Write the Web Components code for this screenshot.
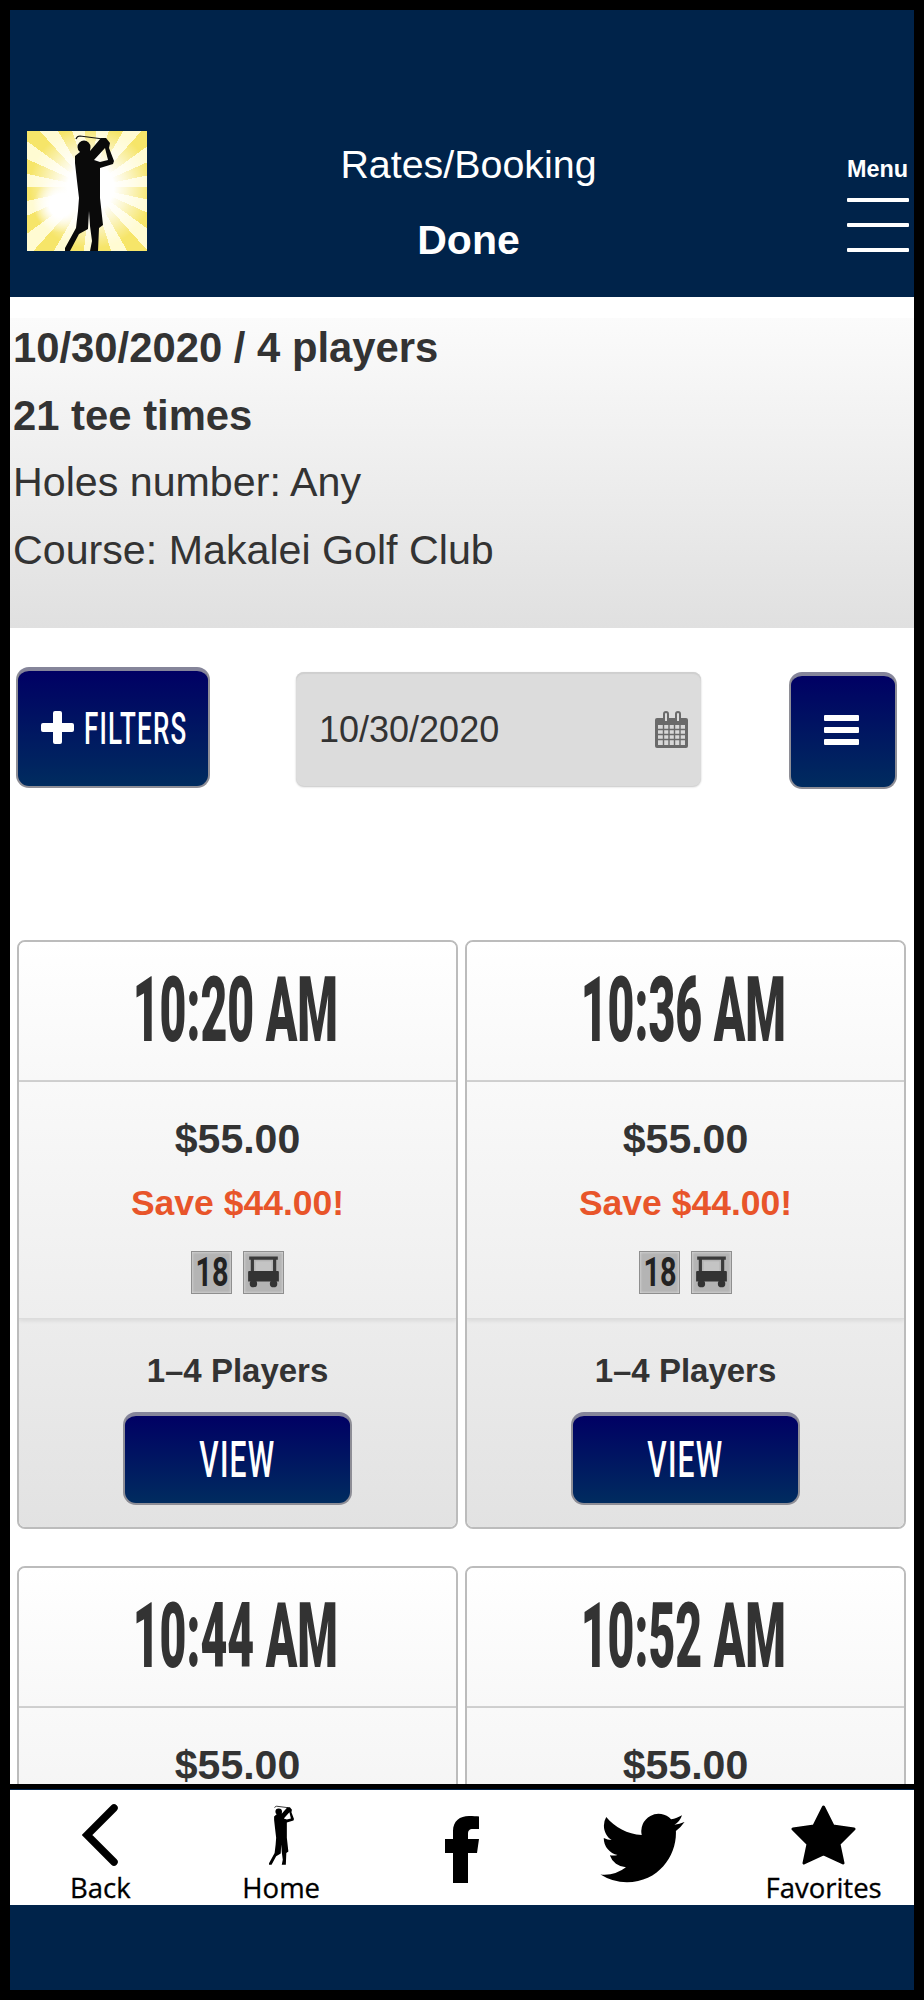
<!DOCTYPE html>
<html>
<head>
<meta charset="utf-8">
<title>Rates/Booking</title>
<style>
html, body { margin: 0; padding: 0; background: #000; }
body { font-family: "Liberation Sans", Arial, sans-serif; color: #333; }
</style>
</head>
<body>
<golf-app>
  <golf-header slot="top" title="Rates/Booking" status="Done"></golf-header>
  <golf-summary>
    <b>10/30/2020 / 4 players</b>
    <b>21 tee times</b>
    <span>Holes number: Any</span>
    <span>Course: Makalei Golf Club</span>
  </golf-summary>
  <golf-toolbar date="10/30/2020"></golf-toolbar>
  <tee-list>
    <tee-card time="10:20 AM" price="$55.00" save="Save $44.00!" players="1–4 Players"></tee-card>
    <tee-card time="10:36 AM" price="$55.00" save="Save $44.00!" players="1–4 Players"></tee-card>
    <tee-card time="10:44 AM" price="$55.00" save="Save $44.00!" players="1–4 Players"></tee-card>
    <tee-card time="10:52 AM" price="$55.00" save="Save $44.00!" players="1–4 Players"></tee-card>
  </tee-list>
  <golf-footer slot="bottom"></golf-footer>
</golf-app>

<script>
const GOLFER = 'M53 21L48 25L48 32L50 50L52 67L51 80L49 97L38 117L38 120L43 120L52 103L61 98L62 80L63 95L65 110L63 120L71 120L72 97L76 94L73 67L73 37L86 33L87 30L82 17L83 12L79 7L74 7L63 20L63.500 16A6.500 6.500 0 0 0 50.500 16A6.500 6.500 0 0 0 53 21ZM67 29L78 17L81 29L73 31Z';
const CONDENSED = '"Roboto", "Liberation Sans", sans-serif';

//=============APP FRAME========================================================
class GolfApp extends HTMLElement {
  constructor() {
    super();
    this.attachShadow({ mode: 'open' });
    this.shadowRoot.innerHTML = `
    <style>
      :host { display: block; width: 904px; height: 1980px; margin: 10px; background: #fff; }
      .frame { display: flex; flex-direction: column; height: 100%; }
      .scroll { flex: 1; min-height: 0; overflow: hidden; }
    </style>
    <div class="frame">
      <slot name="top"></slot>
      <div class="scroll"><slot></slot></div>
      <slot name="bottom"></slot>
    </div>`;
  }
}
customElements.define('golf-app', GolfApp);

//=============HEADER===========================================================
class GolfHeader extends HTMLElement {
  constructor() {
    super();
    this.attachShadow({ mode: 'open' });
    this.shadowRoot.innerHTML = `
    <style>
      :host { display: block; height: 287px; background: #00234a; color: #fff; }
      .row { display: grid; grid-template-columns: 120px 1fr 62px; padding: 121px 5px 0 17px; }
      .logo { width: 120px; height: 120px; display: block;
        background:
          radial-gradient(circle at 28% 62%, #fff 0 10%, rgba(255,255,255,0) 24%),
          radial-gradient(circle at 53% 47%, #fff 0 26%, rgba(255,255,255,.7) 40%, rgba(255,255,255,0) 68%),
          repeating-conic-gradient(from 6deg at 53% 47%, #fffbd2 0 12deg, #f6e569 12deg 24deg); }
      .logo svg { display: block; }
      .title { text-align: center; padding-right: 57px; margin-top: -3px; }
      .name { font-size: 39.400px; line-height: 72px; height: 76px; }
      .state { font-size: 41px; font-weight: bold; line-height: 72px; }
      .menu { font-size: 23.400px; font-weight: bold; line-height: 28px; margin-top: 24px; white-space: nowrap; }
      .bar { height: 4px; width: 62px; background: #fff; border-radius: 1px; margin-bottom: 21px; }
      .menu .bar:first-of-type { margin-top: 15px; }
    </style>
    <div class="row">
      <div class="logo">
        <svg width="120" height="120" viewBox="0 0 120 120">
          <path d="${GOLFER}" fill="#0a0a0a" fill-rule="evenodd"/>
          <path d="M76 8L53 5Q50 5 49 8" fill="none" stroke="#111" stroke-width="1.200"/>
        </svg>
      </div>
      <div class="title">
        <div class="name"></div>
        <div class="state"></div>
      </div>
      <div class="menu">Menu<div class="bar"></div><div class="bar"></div><div class="bar"></div></div>
    </div>`;
    this.shadowRoot.querySelector('.name').textContent = this.getAttribute('title');
    this.shadowRoot.querySelector('.state').textContent = this.getAttribute('status');
  }
}
customElements.define('golf-header', GolfHeader);

//=============SEARCH SUMMARY===================================================
class GolfSummary extends HTMLElement {
  constructor() {
    super();
    this.attachShadow({ mode: 'open' });
    this.shadowRoot.innerHTML = `
    <style>
      :host { display: block; margin-top: 21px; height: 310px; box-sizing: border-box; padding-left: 3px;
        background: linear-gradient(#fbfbfb, #e0e0e0);
        font-size: 41.800px; line-height: 67.500px; color: #333; }
      .lines { transform: translateY(-4px); }
      ::slotted(*) { display: block; white-space: nowrap; }
      ::slotted(span) { font-size: 41.200px; }
    </style>
    <div class="lines"><slot></slot></div>`;
  }
}
customElements.define('golf-summary', GolfSummary);

//=============TOOLBAR==========================================================
class BlueButton extends HTMLElement {
  constructor() {
    super();
    this.attachShadow({ mode: 'open' });
    this.shadowRoot.innerHTML = `
    <style>
      :host { display: flex; align-items: center; justify-content: center; box-sizing: border-box;
        border: 2px solid #8e8e96; border-top: 4px solid #85859a; border-radius: 13px;
        background: linear-gradient(#000064, #002c5f); color: #fff; }
    </style>
    <slot></slot>`;
  }
}
customElements.define('blue-button', BlueButton);

class GolfToolbar extends HTMLElement {
  constructor() {
    super();
    this.attachShadow({ mode: 'open' });
    this.shadowRoot.innerHTML = `
    <style>
      :host { display: flex; align-items: flex-start; height: 312px; box-sizing: border-box; padding-left: 6px; background: #fff; }
      .filters { width: 194px; height: 121px; margin-top: 39px; gap: 10px; }
      .plus { display: block; margin-bottom: 3px; }
      .narrow { display: block; width: 102px; white-space: nowrap; font-family: ${CONDENSED};
        font-weight: 500; font-size: 44px; line-height: 50px; letter-spacing: 2px; transform-origin: left center; transform: scaleX(.59); }
      .date { width: 405px; height: 114px; margin: 44px 0 0 86px; box-sizing: border-box; display: flex; align-items: center;
        justify-content: space-between; padding: 2px 13px 0 23px; border-radius: 8px; background: #dcdcdc;
        box-shadow: inset 0 2px 1px #cfcfcf, 0 1px 2px #c4c4c4; font-size: 36px; color: #333; }
      .date svg { display: block; }
      .list { width: 108px; height: 117px; margin: 44px 0 0 88px; flex-direction: column; }
      .list i { display: block; width: 35px; height: 6px; margin: 3px 0; background: #fff; border-radius: 1px; position: relative; top: -2px; left: -2px; }
    </style>
    <blue-button class="filters">
      <svg class="plus" width="33" height="33" viewBox="0 0 33 33"><path d="M12 2a2 2 0 0 1 2-2h5a2 2 0 0 1 2 2v10h10a2 2 0 0 1 2 2v5a2 2 0 0 1-2 2H21v10a2 2 0 0 1-2 2h-5a2 2 0 0 1-2-2V21H2a2 2 0 0 1-2-2v-5a2 2 0 0 1 2-2h10z" fill="#fff"/></svg>
      <span class="narrow">FILTERS</span>
    </blue-button>
    <div class="date">
      <span class="val"></span>
      <svg width="33" height="38" viewBox="0 0 33 38">
        <path d="M2 7h29a2 2 0 0 1 2 2v26a2 2 0 0 1-2 2H2a2 2 0 0 1-2-2V9a2 2 0 0 1 2-2z" fill="#6a6a6a"/>
        <path d="M3 14h27v20H3z" fill="#d8d8d8"/>
        <path d="M3 18.500h27M3 23.500h27M3 28.500h27M8.500 14v20M14 14v20M19.500 14v20M25 14v20" stroke="#6a6a6a" stroke-width="1.400" fill="none"/>
        <path d="M9 10V3a2 2 0 0 1 4 0v7M21 10V3a2 2 0 0 1 4 0v7" stroke="#6a6a6a" stroke-width="2" fill="#dcdcdc"/>
      </svg>
    </div>
    <blue-button class="list"><i></i><i></i><i></i></blue-button>`;
    this.shadowRoot.querySelector('.val').textContent = this.getAttribute('date');
  }
}
customElements.define('golf-toolbar', GolfToolbar);

//=============TEE TIMES========================================================
class TeeList extends HTMLElement {
  constructor() {
    super();
    this.attachShadow({ mode: 'open' });
    this.shadowRoot.innerHTML = `
    <style>
      :host { display: grid; grid-template-columns: 1fr 1fr; gap: 37px 7px; padding: 0 8px 0 7px; background: #fff; }
    </style>
    <slot></slot>`;
  }
}
customElements.define('tee-list', TeeList);

class TeeCard extends HTMLElement {
  constructor() {
    super();
    this.attachShadow({ mode: 'open' });
    this.shadowRoot.innerHTML = `
    <style>
      :host { display: block; box-sizing: border-box; height: 589px; border: 2px solid #bcbcbc; border-radius: 8px;
        overflow: hidden; text-align: center; color: #333; }
      .head { height: 140px; box-sizing: border-box; display: flex; align-items: center; justify-content: center;
        padding: 0 4px 2px 0; background: linear-gradient(#fff, #f8f8f8); border-bottom: 2px solid #d0d0d0; }
      .time { display: inline-block; white-space: nowrap; font-family: ${CONDENSED}; font-weight: 900;
        font-size: 91px; line-height: 100px; transform: scaleX(.51); color: #333; }
      .mid { height: 237px; box-sizing: border-box; padding-top: 25px; background: linear-gradient(#f9f9f9, #eeeeee);
        border-bottom: 1px solid #dcdcdc; box-shadow: 0 2px 4px rgba(0,0,0,.08); position: relative; }
      .price { font-size: 41px; font-weight: bold; line-height: 64px; }
      .save { font-size: 35.500px; font-weight: bold; line-height: 64px; color: #e8552a; }
      .icons { display: flex; justify-content: center; gap: 11px; margin-top: 16px; }
      .tag { width: 41px; height: 43px; box-sizing: border-box; display: flex; align-items: center; justify-content: center;
        background: #b4b4b4; border: 1px solid #8f8f8f; box-shadow: inset 0 0 3px #e4e4e4; }
      .tag span { display: inline-block; font-family: ${CONDENSED}; font-weight: 700; font-size: 40px; line-height: 40px;
        transform: scaleX(.72); color: #222; }
      .foot { height: 210px; box-sizing: border-box; padding-top: 32px; background: linear-gradient(#ececec, #e2e2e2); }
      .players { font-size: 33px; font-weight: bold; line-height: 40px; }
      blue-button { width: 229px; height: 93px; margin: 21px auto 0; }
      .view { display: inline-block; font-family: ${CONDENSED}; font-weight: 500; font-size: 50px; line-height: 60px;
        transform: scaleX(.6); letter-spacing: 2px; }
    </style>
    <div class="head"><span class="time"></span></div>
    <div class="mid">
      <div class="price"></div>
      <div class="save"></div>
      <div class="icons">
        <div class="tag"><span>18</span></div>
        <div class="tag">
          <svg width="33" height="35" viewBox="0 0 31 33">
            <path d="M2 3h27M5 3v12M26 3v12" stroke="#3a3a3a" stroke-width="3" fill="none"/>
            <path d="M8 6h15v9H8z" fill="#c4c4c4"/>
            <path d="M2 15h27a1 1 0 0 1 1 1v9H1v-9a1 1 0 0 1 1-1z" fill="#333"/>
            <circle cx="6" cy="27" r="3.500" fill="#333"/><circle cx="25" cy="27" r="3.500" fill="#333"/>
          </svg>
        </div>
      </div>
    </div>
    <div class="foot">
      <div class="players"></div>
      <blue-button><span class="view">VIEW</span></blue-button>
    </div>`;
    this.shadowRoot.querySelector('.time').textContent = this.getAttribute('time');
    this.shadowRoot.querySelector('.price').textContent = this.getAttribute('price');
    this.shadowRoot.querySelector('.save').textContent = this.getAttribute('save');
    this.shadowRoot.querySelector('.players').textContent = this.getAttribute('players');
  }
}
customElements.define('tee-card', TeeCard);

//=============FOOTER===========================================================
class GolfFooter extends HTMLElement {
  constructor() {
    super();
    this.attachShadow({ mode: 'open' });
    this.shadowRoot.innerHTML = `
    <style>
      :host { display: block; box-sizing: border-box; background: #00234a; height: 206px; border-top: 5px solid #000; }
      nav { display: grid; grid-template-columns: repeat(5, 1fr); height: 115px; margin-top: 1px; background: #fff; color: #000;
        font-family: "Open Sans", "Noto Sans", sans-serif; font-size: 27.500px; line-height: 34px; text-align: center;
        -webkit-text-stroke: .3px #000; }
      .item { display: flex; flex-direction: column; align-items: center; padding-top: 14px; box-sizing: border-box; }
      .item svg { display: block; }
      .item span { margin-top: 5px; }
      .f { padding-top: 26px; }
      .bird { padding-top: 23px; }
    </style>
    <nav>
      <div class="item">
        <svg width="36" height="62" viewBox="0 0 36 62"><path d="M32 4L5 31L32 58" fill="none" stroke="#000" stroke-width="7.500" stroke-linecap="round"/></svg>
        <span>Back</span>
      </div>
      <div class="item">
        <svg width="27" height="62" viewBox="36 3 53 117"><path d="${GOLFER}" fill="#000" fill-rule="evenodd"/><path d="M76 8L53 5Q50 5 49 8" fill="none" stroke="#000" stroke-width="1.500"/></svg>
        <span>Home</span>
      </div>
      <div class="item f">
        <svg width="34" height="67" viewBox="0 0 34 67"><path d="M8 67V37H0V23h8v-8C8 5 15 0 24 0c4 0 8 .3 10 .5V13h-6c-4 0-5 2-5 5v5h11l-2 14h-9v30z" fill="#000"/></svg>
      </div>
      <div class="item bird">
        <svg width="85" height="70" viewBox="0 2 24 20"><path d="M23.953 4.570a10 10 0 0 1-2.825.775 4.958 4.958 0 0 0 2.163-2.723c-.951.555-2.005.959-3.127 1.184a4.920 4.920 0 0 0-8.384 4.482C7.690 8.095 4.067 6.130 1.640 3.162a4.822 4.822 0 0 0-.666 2.475c0 1.710.870 3.213 2.188 4.096a4.904 4.904 0 0 1-2.228-.616v.060a4.923 4.923 0 0 0 3.946 4.827 4.996 4.996 0 0 1-2.212.085 4.936 4.936 0 0 0 4.604 3.417 9.867 9.867 0 0 1-6.102 2.105c-.390 0-.779-.023-1.170-.067a13.995 13.995 0 0 0 7.557 2.209c9.053 0 13.998-7.496 13.998-13.985 0-.210 0-.420-.015-.630A9.935 9.935 0 0 0 24 4.590z" fill="#000"/></svg>
      </div>
      <div class="item">
        <svg width="65" height="62" viewBox="0 0 65 62"><path d="M32.500 3L42 22L63 25L48 40L52 59L32.500 50L13 59L17 40L2 25L23 22Z" fill="#000" stroke="#000" stroke-width="3" stroke-linejoin="round"/></svg>
        <span>Favorites</span>
      </div>
    </nav>`;
  }
}
customElements.define('golf-footer', GolfFooter);
</script>
</body>
</html>
